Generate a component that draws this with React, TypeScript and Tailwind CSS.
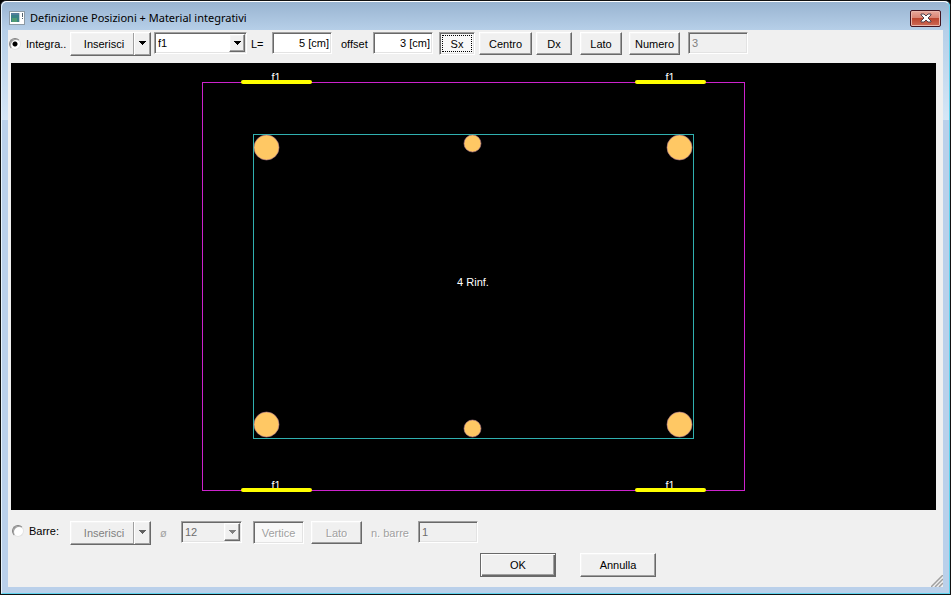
import { useState } from 'react';
import { clsx } from 'clsx';

const RAISED =
  'border border-t-white border-l-white border-b-[#696969] border-r-[#696969] shadow-[inset_-1px_-1px_0_#a0a0a0,inset_1px_1px_0_#f4f4f4]';
const SUNKEN =
  'border border-t-[#a0a0a0] border-l-[#a0a0a0] border-b-white border-r-white shadow-[inset_1px_1px_0_#696969,inset_-1px_-1px_0_#e3e3e3]';

const BARS = [
  { x: 255, y: 84, r: 13 },
  { x: 668, y: 84, r: 13 },
  { x: 255, y: 361, r: 13 },
  { x: 668, y: 361, r: 13 },
  { x: 461, y: 80, r: 9 },
  { x: 461, y: 365, r: 9 },
];

const LINKS = [
  { x: 230, y: 19 },
  { x: 624, y: 19 },
  { x: 230, y: 427 },
  { x: 624, y: 427 },
];

interface ButtonProps {
  children: string;
  className: string;
  pressed?: boolean;
  disabled?: boolean;
  onClick?: () => void;
}

function ToolButton({ children, className, pressed, disabled, onClick }: ButtonProps) {
  return (
    <button
      type="button"
      disabled={disabled}
      aria-pressed={pressed}
      onClick={onClick}
      className={clsx(
        'relative h-[23px] shrink-0',
        pressed ? SUNKEN : RAISED,
        pressed ? 'bg-[#f8f8f8]' : 'bg-[#f0f0f0]',
        disabled && 'text-[#a0a0a0] [text-shadow:1px_1px_0_#fff]',
        className
      )}
    >
      {children}
      {pressed && !disabled && <span className="absolute inset-[2px] border border-dotted border-black" />}
    </button>
  );
}

function SplitButton({ disabled }: { disabled?: boolean }) {
  return (
    <div className={clsx('mr-px flex h-6 w-[81px] shrink-0 bg-[#f0f0f0]', RAISED)}>
      <button
        type="button"
        disabled={disabled}
        className={clsx('flex-1 border-r border-[#a0a0a0] pl-1', disabled && 'text-[#808080]')}
      >
        Inserisci
      </button>
      <button
        type="button"
        disabled={disabled}
        aria-label="Altre opzioni"
        className={clsx('flex w-4 justify-center border-l border-white pt-2', disabled && 'text-[#606060]')}
      >
        <DownArrow />
      </button>
    </div>
  );
}

function DownArrow() {
  return (
    <svg width="7" height="4" viewBox="0 0 7 4" shapeRendering="crispEdges" fill="currentColor">
      <path d="M0 0h7v1h-1v1h-1v1h-1v1h-1v-1h-1v-1h-1v-1h-1z" />
    </svg>
  );
}

interface DropDownProps {
  label: string;
  options: string[];
  className: string;
  disabled?: boolean;
}

function DropDown({ label, options, className, disabled }: DropDownProps) {
  return (
    <div className={clsx('relative h-[22px] shrink-0', SUNKEN, disabled ? 'bg-[#f0f0f0]' : 'bg-white', className)}>
      <select
        aria-label={label}
        disabled={disabled}
        className={clsx('block h-5 w-full appearance-none pl-[3px] outline-none', disabled && 'text-[#6d6d6d] opacity-100')}
      >
        {options.map(o => (
          <option key={o}>{o}</option>
        ))}
      </select>
      <span
        className={clsx(
          'pointer-events-none absolute top-px right-px bottom-px flex w-4 items-center justify-center bg-[#f0f0f0]',
          RAISED,
          disabled && 'text-[#808080]'
        )}
      >
        <DownArrow />
      </span>
    </div>
  );
}

function Radio({ id, checked, onChange }: { id: string; checked: boolean; onChange: () => void }) {
  return (
    <input
      type="radio"
      name="mode"
      id={id}
      checked={checked}
      onChange={onChange}
      className="size-3 shrink-0 appearance-none rounded-full border border-t-[#808080] border-r-[#e3e3e3] border-b-[#e3e3e3] border-l-[#808080] bg-white shadow-[inset_1px_1px_0_#a0a0a0] checked:bg-[radial-gradient(circle,#000_2px,#fff_3px)]"
    />
  );
}

function CloseIcon() {
  return (
    <svg width="12" height="10" viewBox="0 0 12 10">
      <path d="M1 1h3l2 2 2-2h3v1L8 5l3 3v1H8L6 7 4 9H1V8l3-3-3-3z" fill="#fff" stroke="#53404a" />
    </svg>
  );
}

function AppIcon() {
  return (
    <svg width="16" height="14" viewBox="0 0 16 14" shapeRendering="crispEdges">
      <path d="M0 0h16v14H0z" fill="#8c9aa5" />
      <path d="M1 1h14v12H1z" fill="#fff" />
      <path d="M2 2h8v9H2z" fill="#3a8187" />
      <path d="M2 2h8v2H2z" fill="#547e9c" />
      <path d="M3 7h5v4H3z" fill="#4f9b73" />
      <path d="M10 2h1v9h-1z" fill="#c5d0d8" />
      <path d="M13 2h1v4h-1zM13 7h1v1h-1z" fill="#53616e" />
    </svg>
  );
}

function SectionView() {
  return (
    <svg
      viewBox="0 0 925 447"
      role="img"
      aria-label="Sezione"
      className="h-full w-full"
      fontSize="11"
      textAnchor="middle"
    >
      <g fill="none" shapeRendering="crispEdges">
        <rect x="191.5" y="19.5" width="542" height="408" stroke="#cc22cc" />
        <rect x="242.5" y="71.5" width="440" height="304" stroke="#30b0b0" />
      </g>
      {BARS.map(b => (
        <circle key={`${b.x}-${b.y}`} cx={b.x + 0.5} cy={b.y + 0.5} r={b.r - 0.5} fill="#ffc864" stroke="#b07890" strokeWidth="0.6" />
      ))}
      {LINKS.map(l => (
        <g key={`${l.x}-${l.y}`}>
          <text x={l.x + 35} y={l.y - 1} fill="#fff">f1</text>
          <path d={`M${l.x + 2} ${l.y}h67`} stroke="#ff0" strokeWidth="4" strokeLinecap="round" />
        </g>
      ))}
      <text x="462" y="223" fill="#fff">4 Rinf.</text>
    </svg>
  );
}

export default function App() {
  const [mode, setMode] = useState<'integra' | 'barre'>('integra');
  const [side, setSide] = useState('Sx');

  return (
    <div className="h-screen bg-black font-['Liberation_Sans',Arial,sans-serif] text-[11px] leading-4 text-black">
      {/* Window frame */}
      <div className="flex h-full flex-col rounded-t-md border border-[#111] bg-[#bad0ea]">
        <div className="flex min-h-0 flex-1 flex-col rounded-t-md border border-t-white border-r-[#5fd3ee] border-b-[#5fd3ee] border-l-[#e6f3fc] bg-[linear-gradient(#99b4d1,#b6cfe8_28px,#d5e6f6_118px,#bad0ea_118px)] px-[6px] pb-[6px]">
          <header className="flex h-7 shrink-0 items-center pt-1 pr-[2px] pl-px">
            <AppIcon />
            <h1 className="ml-[5px] flex-1 font-['Noto_Sans','Open_Sans',sans-serif] text-[11px]">
              Definizione Posizioni + Material integrativi
            </h1>
            <button
              type="button"
              aria-label="Chiudi"
              className="flex h-[17px] w-[31px] items-center justify-center rounded-xs border border-[#431420] bg-[linear-gradient(#e8a99c,#d98474_45%,#bb4630_50%,#cf6a55)] shadow-[inset_0_0_0_1px_#e9b5aa]"
            >
              <CloseIcon />
            </button>
          </header>

          <main className="relative flex min-h-0 flex-1 flex-col bg-[#f0f0f0]">
            <div className="flex h-[33px] shrink-0 items-start pt-[2px]">
              <label className="flex h-6 w-[62px] shrink-0 items-center gap-[5px] pl-px">
                <Radio id="integra" checked={mode === 'integra'} onChange={() => setMode('integra')} />
                <span>Integra..</span>
              </label>
              <SplitButton />
              <DropDown label="Posizione" options={['f1', 'f2']} className="ml-[2px] w-[93px]" />
              <label htmlFor="length" className="ml-1 w-[21px] shrink-0 leading-6">L=</label>
              <input id="length" defaultValue="5 [cm]" className={clsx('h-[22px] w-[60px] shrink-0 bg-white pr-[2px] text-right outline-none', SUNKEN)} />
              <label htmlFor="offset" className="ml-[9px] w-8 shrink-0 leading-6">offset</label>
              <input id="offset" defaultValue="3 [cm]" className={clsx('h-[22px] w-[60px] shrink-0 bg-white pr-[2px] text-right outline-none', SUNKEN)} />
              <ToolButton className="ml-[6px] w-[36px]" pressed={side === 'Sx'} onClick={() => setSide('Sx')}>Sx</ToolButton>
              <ToolButton className="ml-1 w-[53px]" pressed={side === 'Centro'} onClick={() => setSide('Centro')}>Centro</ToolButton>
              <ToolButton className="ml-1 w-[36px]" pressed={side === 'Dx'} onClick={() => setSide('Dx')}>Dx</ToolButton>
              <ToolButton className="ml-2 w-[42px]" pressed={side === 'Lato'} onClick={() => setSide('Lato')}>Lato</ToolButton>
              <ToolButton className="ml-[7px] w-[51px]" pressed={side === 'Numero'} onClick={() => setSide('Numero')}>Numero</ToolButton>
              <input aria-label="Numero" disabled defaultValue="3" className={clsx('ml-2 h-[22px] w-[60px] shrink-0 pl-[3px] text-[#808080]', SUNKEN)} />
            </div>

            {/* Cross section drawing */}
            <div className="mr-[7px] ml-[3px] min-h-0 flex-1 bg-black">
              <SectionView />
            </div>

            <div className="flex shrink-0 items-start pt-[11px]">
              <label className="flex h-5 w-[62px] shrink-0 items-center gap-[5px] pl-1">
                <Radio id="barre" checked={mode === 'barre'} onChange={() => setMode('barre')} />
                <span>Barre:</span>
              </label>
              <SplitButton disabled />
              <span className="ml-2 w-[21px] shrink-0 leading-6 text-[#a0a0a0]">ø</span>
              <DropDown label="Diametro" options={['12', '14', '16']} className="w-[61px]" disabled />
              <ToolButton className="ml-[11px] w-[51px]" pressed disabled>Vertice</ToolButton>
              <ToolButton className="ml-[7px] w-[51px]" disabled>Lato</ToolButton>
              <label htmlFor="bars" className="ml-[9px] w-[47px] shrink-0 leading-6 text-[#a0a0a0] [text-shadow:1px_1px_0_#fff]">n. barre</label>
              <input id="bars" disabled defaultValue="1" className={clsx('h-[22px] w-[60px] shrink-0 pl-[3px] text-[#6d6d6d]', SUNKEN)} />
            </div>

            <div className="flex shrink-0 justify-center gap-6 pt-2 pb-[10px] pl-[185px]">
              <button type="submit" className="h-6 w-[76px] border border-[#696969] bg-[#f0f0f0] shadow-[inset_1px_1px_0_#fff,inset_-1px_-1px_0_#696969,inset_-2px_-2px_0_#a0a0a0]">
                OK
              </button>
              <button type="button" className={clsx('h-6 w-[76px] bg-[#f0f0f0]', RAISED)}>Annulla</button>
            </div>

            <svg width="12" height="12" viewBox="0 0 12 12" className="absolute right-0 bottom-0">
              <path d="M0 12L12 0M4 12L12 4M8 12L12 8" stroke="#a0a0a0" strokeWidth="1.5" />
            </svg>
          </main>
        </div>
      </div>
    </div>
  );
}
